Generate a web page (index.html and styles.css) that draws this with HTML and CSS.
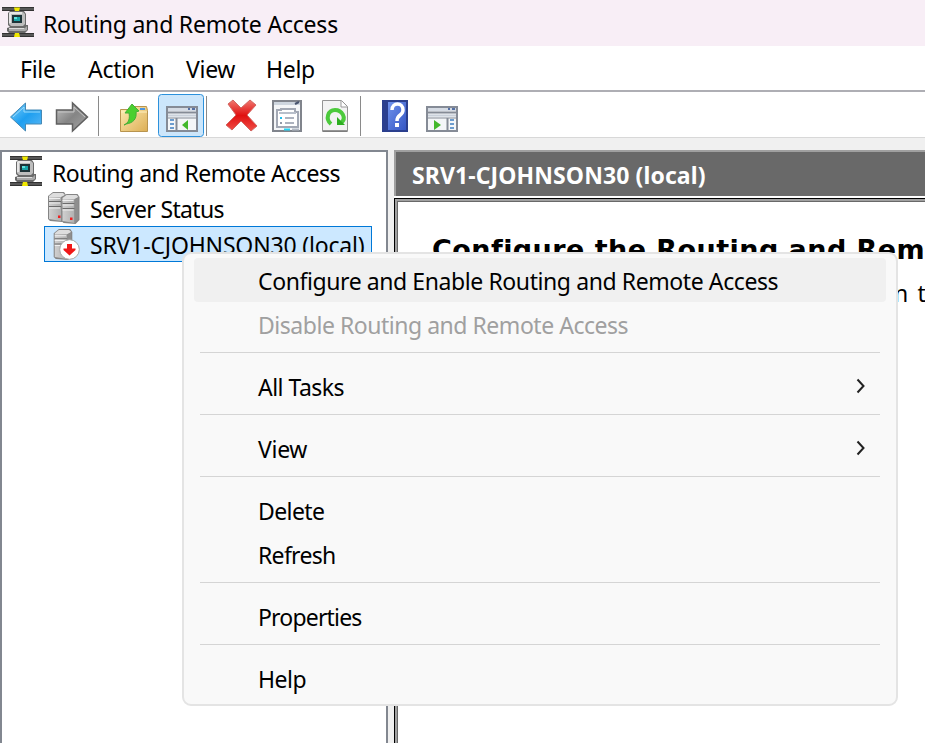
FILE: index.html
```html
<!DOCTYPE html>
<html lang="en">
<head>
<meta charset="utf-8">
<title>Routing and Remote Access</title>
<link rel="stylesheet" href="styles.css">
</head>
<body>
<svg width="0" height="0" class="defs">
  <defs>
    <linearGradient id="blue" x1="0" y1="0" x2="1" y2="1"><stop offset="0" stop-color="#7fd0fb"/><stop offset=".5" stop-color="#1e9ff0"/><stop offset="1" stop-color="#5cb8f5"/></linearGradient>
    <linearGradient id="grey" x1="0" y1="0" x2="1" y2="1"><stop offset="0" stop-color="#c4c4c4"/><stop offset=".5" stop-color="#858585"/><stop offset="1" stop-color="#a5a5a5"/></linearGradient>
    <linearGradient id="gold" x1="0" y1="0" x2="1" y2="1"><stop offset="0" stop-color="#ffedb5"/><stop offset="1" stop-color="#dcae55"/></linearGradient>
    <linearGradient id="red" x1="0" y1="0" x2="0" y2="1"><stop offset="0" stop-color="#f07870"/><stop offset=".5" stop-color="#e01010"/><stop offset="1" stop-color="#f05048"/></linearGradient>
    <linearGradient id="navy" x1="0" y1="0" x2="1" y2="1"><stop offset="0" stop-color="#6f92ec"/><stop offset="1" stop-color="#3556c4"/></linearGradient>
    <linearGradient id="case" x1="0" y1="0" x2="1" y2="0"><stop offset="0" stop-color="#d0d0d0"/><stop offset="1" stop-color="#b0b0b0"/></linearGradient>
    <symbol id="router" viewBox="0 0 32 32">
      <path fill="#333" d="M0 0h32v4H0zM0 26h32v4H0z"/><path fill="#7c7c7c" d="M0 1.500h32v1H0zM0 27.500h32v1H0z"/>
      <path fill="#f0e800" d="M12 .5h6l-1 4h-4zM12 30l1-4.500h4l1 4.500z"/>
      <path fill="#6a6a6a" d="M8 4h14l2 3v11h2v5l-3 3H7l-2-2v-3l3-1-2-2V6z"/>
      <path fill="#bdbdbd" d="M8 5h13l2 2v10l-2 2H9l-2-2V6z"/><path fill="#e6e6e6" d="M8 5h12v2H9v9H7V6z"/>
      <path fill="#a8a8a8" d="M7 21h16l2-2v4l-2 1H7z"/><path fill="#dcdcdc" d="M7 21h15v1H7z"/>
      <path fill="#1c3338" d="M10 8h10v8H10z"/><path fill="#18a4a8" d="M12 10h6v4h-6z"/><path fill="#5fe0df" d="M12 10h3v2h-3z"/>
    </symbol>
    <symbol id="tower" viewBox="0 0 18 30">
      <path fill="#858585" d="M5 0h11l2 3v23l-4 4-12-1-2-2V4z"/>
      <path fill="#dedede" d="M1 4l4-3h10l2 2-4 2H1z"/><path fill="url(#case)" d="M1 5h12v24L1 27z"/>
      <path fill="#8e8e8e" d="M13 6l4-3v22l-4 4z"/>
      <path stroke="#6c6c6c" d="M1 9.500h12M1 14.500h12"/><path stroke="#efefef" d="M1 6.500h11M1 11h11M1 16h11"/>
    </symbol>
  </defs>
</svg>
<div class="window">
  <header class="title"><svg class="app-icon"><use href="#router"/></svg><span class="t-title">Routing and Remote Access</span></header>
  <nav class="menubar"><span class="m-file">File</span><span class="m-action">Action</span><span class="m-view">View</span><span class="m-help">Help</span></nav>
  <div class="toolbar">
    <svg class="tools" width="480" height="45" viewBox="0 0 480 45">
      <path d="M10.500 25L25.500 11v7h16v14h-16v7z" fill="url(#blue)" stroke="#4589b5"/><path d="M13 25l11-10v5h16" fill="none" stroke="#9cdbfa"/>
      <path d="M87.500 25L72.500 11v7h-16v14h16v7z" fill="url(#grey)" stroke="#606060" stroke-width="1.500"/><path d="M58 20h16v-5l11 10" fill="none" stroke="#c6c6c6"/>
      <path d="M98.500 4v40M206.500 4v40M360.500 4v40" stroke="#8a8a8a"/>
      <path d="M120.500 17.500h9l3-3h14l1 4v21h-27z" fill="url(#gold)" stroke="#b8944f"/><path d="M121 20h26" stroke="#fff0bf"/><path d="M140 17h5" stroke="#4d94dd" stroke-width="2"/>
      <path d="M124 33c5-2 6-7 5-12h-4l7-9 7 7-3 1c1 7-3 11-10 12z" fill="#4bd02f" stroke="#46ad38"/>
      <rect x="158.500" y="2.500" width="45" height="42" rx="3" fill="#cce6fb" stroke="#2c91dc"/>
      <g id="pane"><path d="M167 15h30v24h-30z" fill="#f4f6f8" stroke="#858b96" stroke-width="2"/><path d="M168 16h28v3h-28z" fill="#d5dbe4"/><path d="M168 20.500h28" stroke="#858b96" stroke-width="2"/><path d="M168 23.500h28" stroke="#c9d0da" stroke-width="2"/><path d="M168 26h28" stroke="#858b96"/><path d="M188 17h2m2 0h3" stroke="#5470a5" stroke-width="2"/></g>
      <path d="M176.500 26v12" stroke="#858b96" stroke-width="2"/><path d="M170 28h4m-4 4h4m-4 4h4" stroke="#3f7fc0" stroke-width="1.700"/><path d="M182 33l6-5v10z" fill="#43b82c"/>
      <path transform="translate(1 0)" d="M227 12l5-4 8 8 9-8 6 5-9 10 10 11-6 5-10-10-9 9-6-5 10-10z" fill="url(#red)" stroke="#d16560"/>
      <g transform="translate(0 -2)"><path d="M273 11h28v30h-28z" fill="#f4f6f8" stroke="#80848c" stroke-width="2"/><path d="M274 13.500h26" stroke="#ced6df" stroke-width="3"/><path d="M295 14l4-2" stroke="#47536d" stroke-width="2"/><path d="M277 20h4v-1h14v3h3v15h-21z" fill="#fff" stroke="#a2a8b4" stroke-width="2"/><path d="M279 23h17" stroke="#b8bfca" stroke-width="2"/><path d="M280 28h2" stroke="#22bde9" stroke-width="2"/><path d="M280 33h2" stroke="#929baa" stroke-width="2"/><path d="M285 28h9m-9 5h9" stroke="#929baa" stroke-width="1.500"/><path d="M284 39.500h6" stroke="#23d6f5" stroke-width="2"/><path d="M292 39.500h7" stroke="#b3bac5" stroke-width="2"/></g>
      <g transform="translate(0 -2)"><path d="M322.500 10.500h19l6 6v25h-25z" fill="#f3f3f3" stroke="#949494"/><path d="M341 11v6h6" fill="#fff" stroke="#9a9a9a"/><path d="M331 34c-6-5-3-14 4-14s12 8 6 13" fill="none" stroke="#4cca3c" stroke-width="4"/><path d="M337 27l8 8h-8z" fill="#2dae20"/><path d="M323 41h24" stroke="#777" stroke-width="1.500"/></g>
      <g transform="translate(0 -2)"><path d="M382 10h26v32h-26z" fill="#2b3f8e"/><path d="M388 12h18v28h-18z" fill="url(#navy)"/><path d="M392 20c0-8 11-8 11 0 0 6-6 4-6 11" fill="none" stroke="#fff" stroke-width="3.500"/><path d="M395 33h4v4h-4z" fill="#fff"/></g>
      <use href="#pane" x="260"/><path d="M447.500 26v12" stroke="#858b96" stroke-width="2"/><path d="M450 28h4m-4 4h4m-4 4h4" stroke="#3f7fc0" stroke-width="1.700"/><path d="M434 28l7 5-7 5z" fill="#43b82c"/>
    </svg>
  </div>
  <main class="workspace">
    <aside class="tree">
      <div class="node root"><svg class="app-icon"><use href="#router"/></svg><span class="t-root">Routing and Remote Access</span></div>
      <div class="node child"><svg class="srv" viewBox="0 0 34 34"><use href="#tower" x="0" y="1" width="18" height="30"/><use href="#tower" x="13" y="3" width="19" height="30"/><path fill="#f02020" d="M10 24.500h2.500V27H10zM22 26.500h2.500V29H22z"/></svg><span class="t-status">Server Status</span></div>
      <div class="node child selected"><svg class="srv" viewBox="0 0 34 34"><use href="#tower" x="5" y="2" width="20" height="31"/><circle cx="21.500" cy="22.500" r="9.800" fill="#fff" stroke="#a8a8a8"/><path fill="#f01818" d="M19 17h5v4.500h3.500v1.500l-6 5.500-6-5.500v-1.500H19z"/></svg><span class="t-srv">SRV1-CJOHNSON30 (local)</span></div>
    </aside>
    <section class="detail">
      <div class="banner"><span class="t-banner">SRV1-CJOHNSON30 (local)</span></div>
      <article class="page"><h1>Configure the Routing and Rem</h1><p>n t</p></article>
    </section>
  </main>
</div>
<div class="context">
  <div class="item hot"><span class="c-conf">Configure and Enable Routing and Remote Access</span></div>
  <div class="item off"><span class="c-dis">Disable Routing and Remote Access</span></div>
  <hr>
  <div class="item"><span class="c-all">All Tasks</span><svg class="chev" viewBox="0 0 12 18"><path d="M2.500 2.500l6 6.500-6 6.500"/></svg></div>
  <hr>
  <div class="item"><span class="c-view">View</span><svg class="chev" viewBox="0 0 12 18"><path d="M2.500 2.500l6 6.500-6 6.500"/></svg></div>
  <hr>
  <div class="item"><span class="c-del">Delete</span></div>
  <div class="item"><span class="c-ref">Refresh</span></div>
  <hr>
  <div class="item"><span class="c-prop">Properties</span></div>
  <hr>
  <div class="item"><span class="c-help">Help</span></div>
</div>
</body>
</html>
```
FILE: styles.css
```css
* { box-sizing: border-box; }
body { margin: 0; overflow: hidden; font: 23px/32px "Noto Sans", "Open Sans", sans-serif; color: #000; letter-spacing: -0.3px; white-space: nowrap; }
.defs { position: absolute; }
.window { width: 925px; height: 743px; display: flex; flex-direction: column; background: #f0f0f0; overflow: hidden; }
.title { height: 46px; background: #f8eef6; display: flex; align-items: center; padding: 2px 0 0 2px; gap: 9px; }
.t-title { letter-spacing: -0.2px; }
.app-icon { width: 32px; height: 32px; flex: none; margin-top: -2px; }
.menubar { height: 44px; background: #fff; display: flex; padding: 7px 0 0 20px; }
.menubar span { flex: none; }
.m-file { width: 68px; } .m-action { width: 98px; } .m-view { width: 80px; }
.toolbar { height: 48px; background: #fff; border-top: 2px solid #aeaeb4; border-bottom: 1px solid #d8d8d8; }
.tools { display: block; }
.workspace { flex: 1; display: flex; padding-top: 12px; gap: 6px; min-height: 0; }
.tree { width: 388px; background: #fff; border: 2px solid #828790; border-bottom: 0; padding-top: 2px; }
.node { height: 36px; display: flex; align-items: center; }
.root { padding: 2px 0 0 8px; gap: 10px; }
.t-root { letter-spacing: -0.48px; }
.t-status { letter-spacing: -0.68px; padding-top: 1px; }
.t-srv { letter-spacing: -0.17px; padding-top: 1px; }
.child { margin-left: 42px; padding-left: 4px; gap: 8px; }
.srv { width: 34px; height: 34px; flex: none; }
.selected { width: 328px; background: #cce8ff; border: 1px solid #0078d7; padding-left: 3px; }
.detail { flex: 1; display: flex; flex-direction: column; min-width: 0; }
.banner { height: 46px; background: #696969; border: 2px solid #a0a0a0; border-right: 0; border-bottom: 0; color: #fff; font-weight: 700; padding: 7px 0 0 16px; letter-spacing: 0.1px; }
.page { flex: 1; margin-top: 2px; background: #fff; border-left: 1px solid #000; border-top: 1px solid #000; box-shadow: 0 -2px #fff, inset 2px 2px #a0a0a0, inset 3px 3px #696969; padding: 33px 0 0 37px; overflow: hidden; }
h1 { margin: 0; font: 700 27px/36px "DejaVu Sans", sans-serif; letter-spacing: 0.45px; }
p { margin: 9px 0 0 462px; word-spacing: 4px; }
.context { position: absolute; left: 182px; top: 252px; width: 716px; height: 454px; background: #f9f9f9; border: 2px solid #e4e4e4; border-radius: 9px; padding: 4px 10px; }
.item { height: 44px; padding: 7px 19px 0 64px; border-radius: 4px; display: flex; justify-content: space-between; }
.hot { background: #f0f0f0; }
.off { color: #a0a0a0; }
.c-conf { letter-spacing: -0.41px; }
.c-dis { letter-spacing: -0.47px; }
.c-all { letter-spacing: -0.52px; }
.c-del { letter-spacing: -0.6px; }
.c-ref { letter-spacing: -0.7px; }
.c-prop { letter-spacing: -0.82px; }
.c-help { letter-spacing: -0.5px; }
hr { height: 1px; border: 0; background: #d5d5d5; margin: 6px 6px 11px; }
.chev { width: 12px; height: 18px; margin-top: 6px; fill: none; stroke: #222; stroke-width: 2; }
```
